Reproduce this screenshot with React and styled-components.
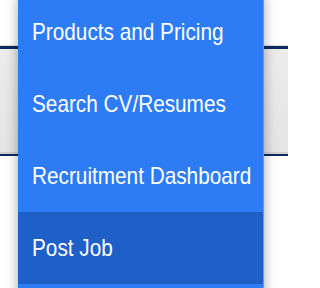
import styled, { createGlobalStyle } from 'styled-components';

const GlobalStyle = createGlobalStyle`
  html, body {
    margin: 0;
    padding: 0;
    background: #fff;
  }
`;

const Page = styled.div`
  position: relative;
  width: 288px;
  height: 288px;
  overflow: hidden;
  display: flex;
  flex-direction: column;
  background: #fff;
`;

const Header = styled.div`
  height: 45px;
  flex-shrink: 0;
  background: #fff;
  border-bottom: 1px solid #dcdcdc;
`;

const NavBar = styled.div`
  height: 103px;
  flex-shrink: 0;
  background: linear-gradient(#ececec, #e4e4e4);
  border-top: 3px solid #0e2a5c;
  border-bottom: 2px solid #d2d2d2;
  box-shadow: 0 2px 0 #0e2a5c;
`;

const Content = styled.div`
  flex: 1;
  margin-top: 2px;
  background: #fff;
`;

const Menu = styled.ul`
  position: absolute;
  top: -4px;
  left: 18px;
  width: 245px;
  margin: 0;
  padding: 0 0 20px;
  list-style: none;
  background: #2d7cf6;
  border-right: 1px solid #5b9cff;
  box-shadow: 0 0 12px rgba(0, 0, 0, 0.35);
`;

const MenuItem = styled.li`
  height: 72px;
  padding-left: 14px;
  background: ${({ $active }) => ($active ? '#1e5fc8' : 'transparent')};
  color: #fff;
  font-family: 'Liberation Sans', Arial, sans-serif;
  font-size: 24px;
  line-height: 72px;
  white-space: nowrap;
  cursor: pointer;
`;

// narrow face isn't available, so squeeze the regular one
const Label = styled.span`
  display: inline-block;
  transform: scaleX(0.865);
  transform-origin: left center;
`;

const items = [
  'Products and Pricing',
  'Search CV/Resumes',
  'Recruitment Dashboard',
  'Post Job',
];

export default function App() {
  return (
    <>
      <GlobalStyle />
      <Page>
        <Header />
        <NavBar />
        <Content />
        <Menu>
          {items.map((label) => (
            <MenuItem key={label} $active={label === 'Post Job'}>
              <Label>{label}</Label>
            </MenuItem>
          ))}
        </Menu>
      </Page>
    </>
  );
}
